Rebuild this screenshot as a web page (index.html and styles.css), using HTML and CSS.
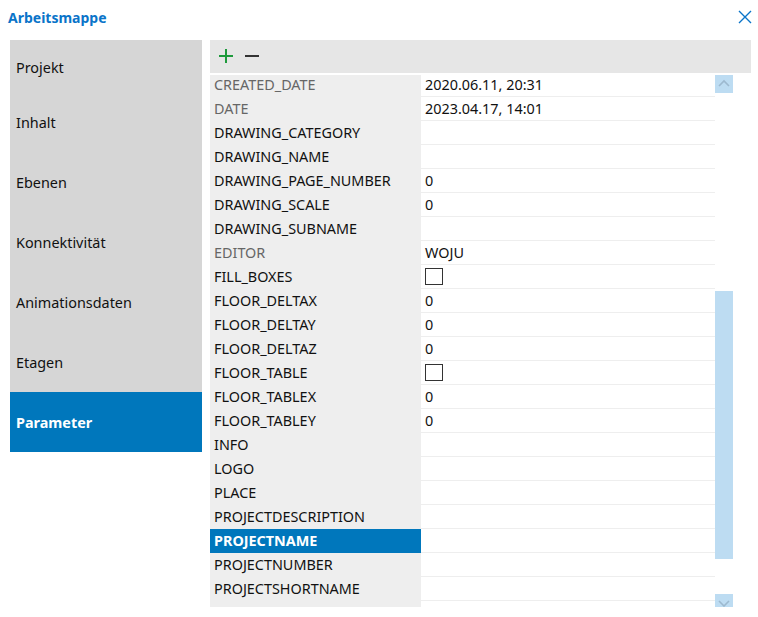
FILE: index.html
```html
<!DOCTYPE html>
<html lang="de">
    <head>
        <meta charset="UTF-8">
        <title>Arbeitsmappe</title>
        <link rel="stylesheet" href="styles.css">
    </head>
    <body>
        <div class="header">
            <h1>Arbeitsmappe</h1>
            <svg class="close" width="14" height="14" viewBox="0 0 14 14">
                <path d="M1 1L13 13M13 1L1 13" stroke="#0a74c9" stroke-width="1.4" fill="none" />
            </svg>
        </div>
        <div class="main">
            <div class="sidebar">
                <div class="tab first">Projekt</div>
                <div class="tab">Inhalt</div>
                <div class="tab">Ebenen</div>
                <div class="tab">Konnektivität</div>
                <div class="tab">Animationsdaten</div>
                <div class="tab">Etagen</div>
                <div class="tab active">Parameter</div>
            </div>
            <div class="panel">
                <div class="toolbar">
                    <svg width="14" height="14" viewBox="0 0 14 14">
                        <path d="M7 0V14M0 7H14" stroke="#1e9a3c" stroke-width="2" />
                    </svg>
                    <svg width="14" height="14" viewBox="0 0 14 14">
                        <path d="M0 7H14" stroke="#333" stroke-width="2" />
                    </svg>
                </div>
                <div class="grid">
                    <div class="rows" id="rows"></div>
                    <div class="scrollbar">
                        <div class="sbtn">
                            <svg width="18" height="18" viewBox="0 0 18 18">
                                <path d="M4 11L9 6L14 11" stroke="#9db9cf" stroke-width="1.6" fill="none" />
                            </svg>
                        </div>
                        <div class="thumb"></div>
                        <div class="sbtn">
                            <svg width="18" height="18" viewBox="0 0 18 18">
                                <path d="M4 7L9 12L14 7" stroke="#9db9cf" stroke-width="1.6" fill="none" />
                            </svg>
                        </div>
                    </div>
                </div>
            </div>
        </div>

        <script>
            const params = [
                ["CREATED_DATE", "2020.06.11, 20:31", "ro"],
                ["DATE", "2023.04.17, 14:01", "ro"],
                ["DRAWING_CATEGORY", ""],
                ["DRAWING_NAME", ""],
                ["DRAWING_PAGE_NUMBER", "0"],
                ["DRAWING_SCALE", "0"],
                ["DRAWING_SUBNAME", ""],
                ["EDITOR", "WOJU", "ro"],
                ["FILL_BOXES", null],
                ["FLOOR_DELTAX", "0"],
                ["FLOOR_DELTAY", "0"],
                ["FLOOR_DELTAZ", "0"],
                ["FLOOR_TABLE", null],
                ["FLOOR_TABLEX", "0"],
                ["FLOOR_TABLEY", "0"],
                ["INFO", ""],
                ["LOGO", ""],
                ["PLACE", ""],
                ["PROJECTDESCRIPTION", ""],
                ["PROJECTNAME", "", "sel"],
                ["PROJECTNUMBER", ""],
                ["PROJECTSHORTNAME", ""],
                ["WORKPLACE", ""]
            ]
            const rows = document.getElementById('rows')
            for (const [name, value, flag] of params) {
                const row = document.createElement('div')
                row.className = "row"
                const n = document.createElement('div')
                n.className = "name"
                if (flag) n.classList.add(flag)
                n.textContent = name
                const v = document.createElement('div')
                v.className = "value"
                if (value === null) {
                    const box = document.createElement('span')
                    box.className = "check"
                    v.append(box)
                } else {
                    v.textContent = value
                }
                row.append(n, v)
                rows.append(row)
            }
        </script>
    </body>
</html>
```

FILE: styles.css
```css
* {
    box-sizing: border-box;
    margin: 0;
    padding: 0;
}

body {
    width: 758px;
    height: 617px;
    overflow: hidden;
    background: #fff;
    font-family: "Noto Sans", "Open Sans", sans-serif;
    font-size: 14.4px;
    color: #111;
}

.header {
    display: flex;
    justify-content: space-between;
    align-items: center;
    height: 34px;
    padding: 0 6px 0 8px;
}

.header h1 {
    font-size: 14px;
    font-weight: 700;
    color: #0a74c9;
}

.close {
    margin-top: -1px;
}

.main {
    display: flex;
    gap: 8px;
    padding: 6px 7px 0 10px;
}

.sidebar {
    width: 192px;
    flex-shrink: 0;
}

.tab {
    height: 60px;
    display: flex;
    align-items: center;
    padding-left: 6px;
    background: #d6d6d6;
}

.tab.first {
    height: 52px;
    padding-top: 2px;
}

.tab.active {
    background: #0077bc;
    color: #fff;
    font-weight: 700;
}

.panel {
    flex: 1;
}

.toolbar {
    height: 33px;
    background: #e6e6e6;
    display: flex;
    align-items: center;
    gap: 12px;
    padding-left: 9px;
    padding-bottom: 1px;
}

.grid {
    margin-top: 2px;
    height: 532px;
    overflow: hidden;
    display: flex;
}

.rows {
    width: 505px;
    margin-top: -2px;
}

.row {
    display: flex;
    height: 24px;
}

.name {
    width: 211px;
    background: #eeeeee;
    padding-left: 4px;
    line-height: 23px;
    white-space: nowrap;
}

.name.ro {
    color: #666;
}

.name.sel {
    background: #0077bc;
    color: #fff;
    font-weight: 700;
}

.value {
    flex: 1;
    border-bottom: 1px solid #eeeeee;
    padding-left: 4px;
    line-height: 23px;
    display: flex;
    align-items: center;
}

.check {
    display: block;
    width: 18px;
    height: 17px;
    border: 1px solid #333;
    background: #fff;
}

.scrollbar {
    width: 18px;
    display: flex;
    flex-direction: column;
}

.sbtn {
    height: 18px;
    background: #bddcf2;
    flex-shrink: 0;
}

.thumb {
    height: 268px;
    margin: 198px 0 35px;
    background: #bddcf2;
    flex-shrink: 0;
}
```
